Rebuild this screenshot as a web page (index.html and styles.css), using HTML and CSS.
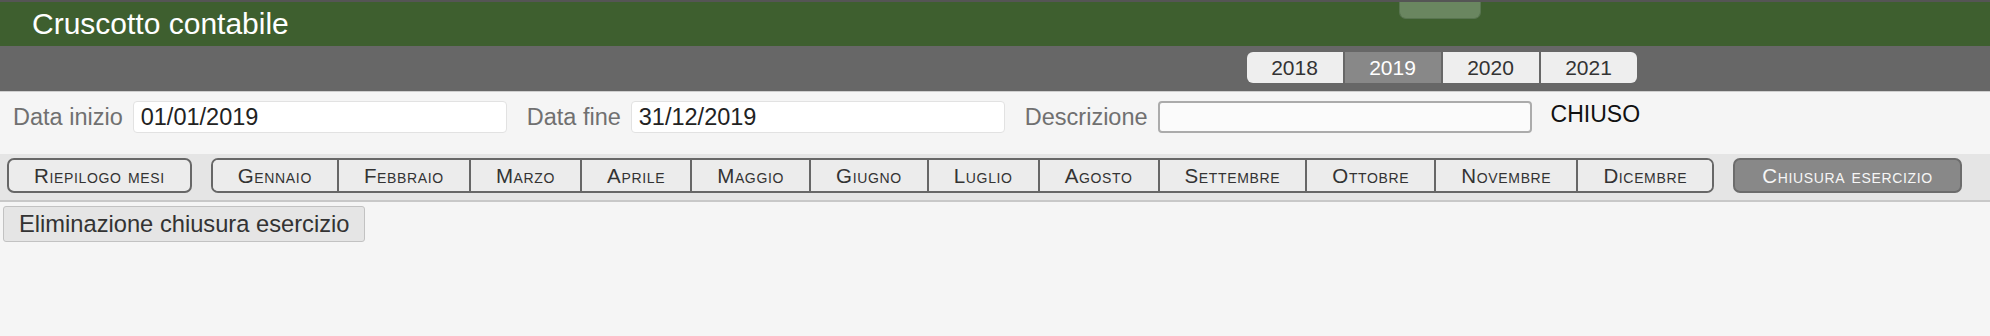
FILE: index.html
```html
<!DOCTYPE html>
<html lang="it">
<head>
<meta charset="utf-8">
<title>Cruscotto contabile</title>
<link rel="stylesheet" href="styles.css">
</head>
<body>
<header class="titlebar">
  <h1 class="title">Cruscotto contabile</h1>
  <div class="handle"></div>
</header>
<nav class="yearbar">
  <div class="years">
    <button class="year">2018</button>
    <button class="year active">2019</button>
    <button class="year">2020</button>
    <button class="year">2021</button>
  </div>
</nav>
<section class="filters">
  <label class="lbl">Data inizio</label>
  <input class="field ro" type="text" value="01/01/2019" readonly>
  <label class="lbl">Data fine</label>
  <input class="field ro" type="text" value="31/12/2019" readonly>
  <label class="lbl">Descrizione</label>
  <input class="field desc" type="text" value="">
  <span class="status">CHIUSO</span>
</section>
<div class="toolbar">
  <button class="tbtn single">Riepilogo mesi</button>
  <div class="months">
    <button class="mbtn">Gennaio</button>
    <button class="mbtn">Febbraio</button>
    <button class="mbtn">Marzo</button>
    <button class="mbtn">Aprile</button>
    <button class="mbtn">Maggio</button>
    <button class="mbtn">Giugno</button>
    <button class="mbtn">Luglio</button>
    <button class="mbtn">Agosto</button>
    <button class="mbtn">Settembre</button>
    <button class="mbtn">Ottobre</button>
    <button class="mbtn">Novembre</button>
    <button class="mbtn">Dicembre</button>
  </div>
  <button class="tbtn single dark">Chiusura esercizio</button>
</div>
<div class="actions">
  <button class="plain">Eliminazione chiusura esercizio</button>
</div>
</body>
</html>
```

FILE: styles.css
```css
* { box-sizing: border-box; }
html, body {
  margin: 0;
  padding: 0;
  background: #f5f5f5;
  font-family: "Liberation Sans", Arial, Helvetica, sans-serif;
}
button, input { font-family: inherit; }

.titlebar {
  position: relative;
  height: 46px;
  border-top: 2px solid #555555;
  background: #3e5f2f;
  display: flex;
  align-items: center;
  padding-left: 32px;
}
.title {
  margin: 0;
  font-size: 30px;
  font-weight: normal;
  color: #ffffff;
  line-height: 44px;
}
.handle {
  position: absolute;
  left: 1399px;
  top: 0;
  width: 82px;
  height: 17px;
  background: #6a8660;
  border: 1px solid #587450;
  border-top: none;
  border-radius: 0 0 7px 7px;
}

.yearbar {
  height: 46px;
  background: #676767;
  border-bottom: 1px solid #cfcfcf;
  display: flex;
  justify-content: center;
  align-items: flex-start;
  padding: 6px 0 0 893px;
}
.years {
  display: flex;
  gap: 2px;
  border-radius: 6px;
  overflow: hidden;
}
.year {
  width: 96px;
  height: 31px;
  border: none;
  margin: 0;
  padding: 0;
  background: #eeeeee;
  color: #333333;
  font-size: 21px;
}
.year.active {
  background: #888888;
  color: #ffffff;
}

.filters {
  display: flex;
  align-items: center;
  height: 62px;
  padding: 9px 0 21px 13px;
}
.lbl {
  font-size: 23.5px;
  color: #707070;
  margin-right: 10px;
}
.field {
  width: 374px;
  height: 32px;
  margin-right: 20px;
  padding: 0 7px;
  font-size: 23.5px;
  color: #222222;
  background: #ffffff;
  border: 1px solid #e2e2e2;
  border-radius: 4px;
  outline: none;
}
.field.desc {
  background: #fbfbfb;
  border: 2px solid #ababab;
  margin-right: 19px;
}
.status {
  align-self: flex-start;
  font-size: 23px;
  line-height: 26px;
  color: #111111;
}

.toolbar {
  display: flex;
  align-items: flex-start;
  gap: 19px;
  height: 48px;
  padding: 4px 0 0 7px;
  background: #e5e5e5;
  border-bottom: 2px solid #c8c8c8;
}
.tbtn, .mbtn {
  flex-shrink: 0;
  white-space: nowrap;
  height: 35px;
  margin: 0;
  padding: 0 25px;
  font-size: 20.5px;
  letter-spacing: 0.65px;
  font-variant: small-caps;
  color: #333333;
  background: #ececec;
}
.tbtn {
  border: 2px solid #676767;
  border-radius: 7px;
  padding: 0 25px;
}
.tbtn.dark {
  padding: 0 27px;
  background: #888888;
  border-color: #6c6c6c;
  color: #f6f6f6;
}
.months {
  flex-shrink: 0;
  display: flex;
  border: 2px solid #676767;
  border-radius: 7px;
  overflow: hidden;
}
.mbtn {
  height: 31px;
  border: none;
  border-left: 2px solid #676767;
}
.mbtn:first-child { border-left: none; }

.actions {
  padding: 4px 0 0 3px;
}
.plain {
  height: 36px;
  margin: 0;
  padding: 0 15px;
  font-size: 23.7px;
  color: #333333;
  background: #e5e5e5;
  border: 1px solid #c2c2c2;
  border-radius: 3px;
}
```
